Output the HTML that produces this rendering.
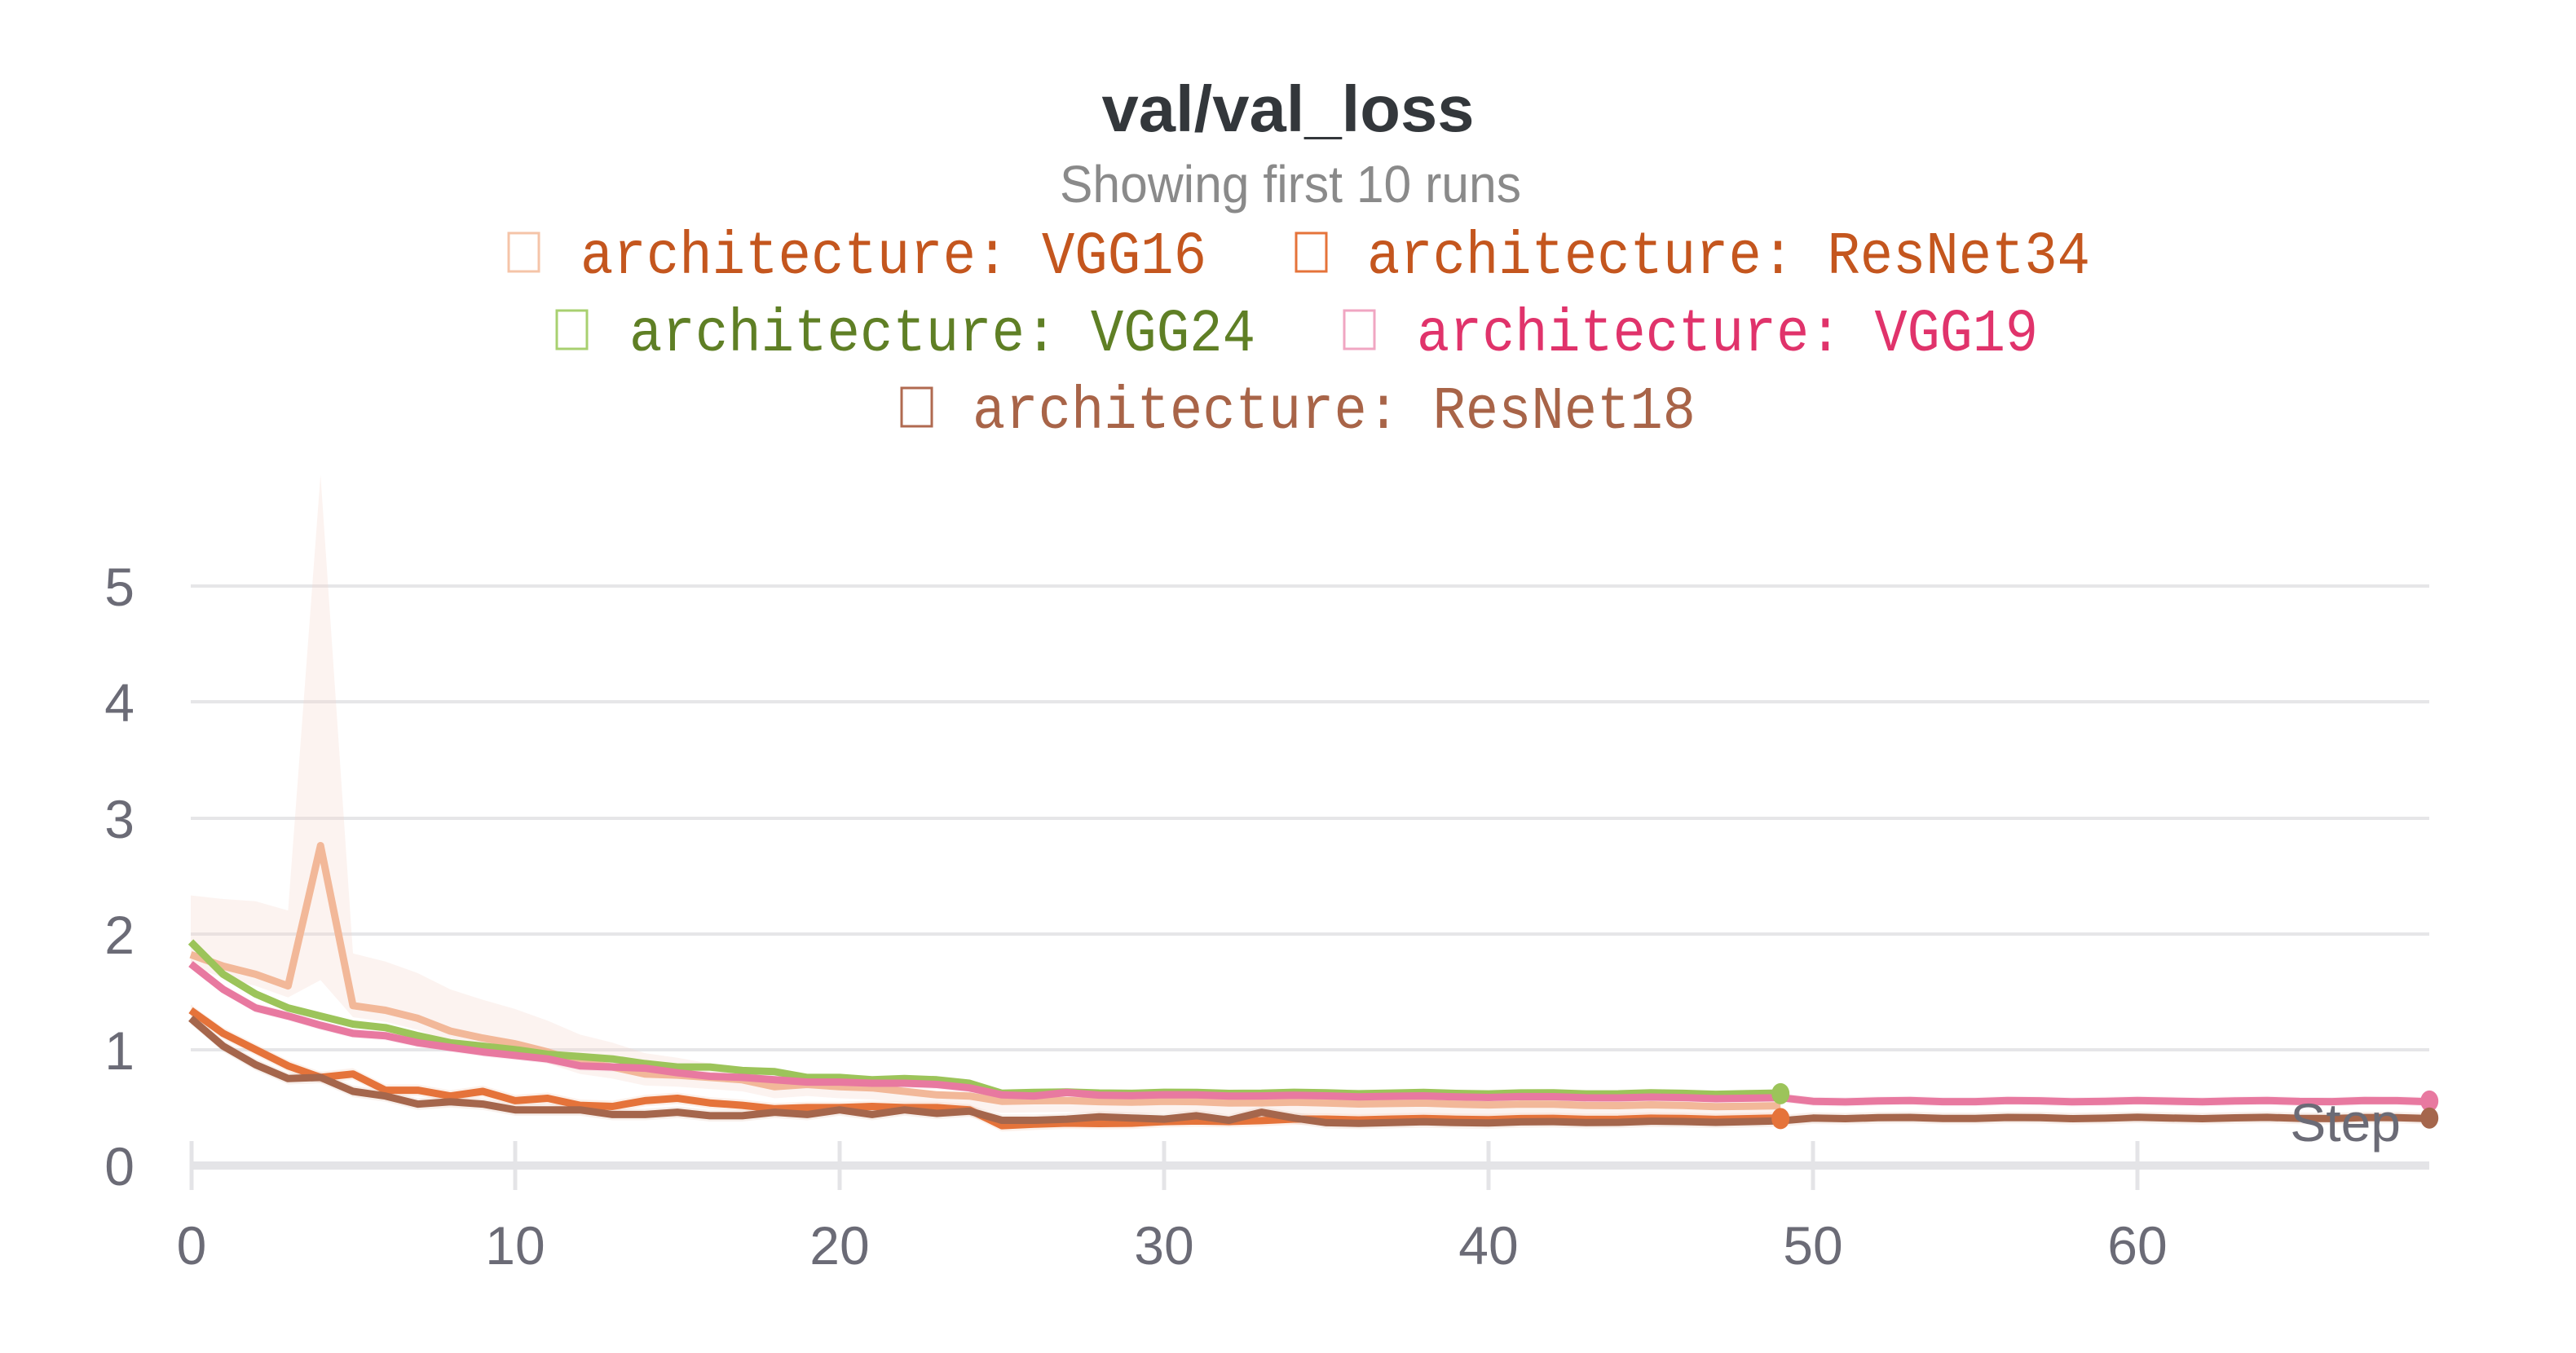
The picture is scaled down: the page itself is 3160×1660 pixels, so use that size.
<!DOCTYPE html>
<html><head><meta charset="utf-8"><style>
html,body{margin:0;padding:0;background:#fff;width:3160px;height:1660px;overflow:hidden}
svg{position:absolute;left:0;top:0}
.m{font-family:"Liberation Mono",monospace;font-size:74px}
.n{font-family:"Liberation Sans",sans-serif;font-size:66px;fill:#6b6b76}
</style></head><body>
<svg id="s" width="3160" height="1660" viewBox="0 0 3160 1660" xmlns="http://www.w3.org/2000/svg">
<text x="1580" y="161" text-anchor="middle" font-family="Liberation Sans,sans-serif" font-weight="bold" font-size="80" fill="#33373b" textLength="457" lengthAdjust="spacingAndGlyphs">val/val_loss</text>
<text x="1583" y="248" text-anchor="middle" font-family="Liberation Sans,sans-serif" font-size="64" fill="#8a8a8a" textLength="566" lengthAdjust="spacingAndGlyphs">Showing first 10 runs</text>

<rect x="624" y="286" width="37" height="47" fill="none" stroke="#f5c4a8" stroke-width="3"/>
<text class="m" x="712" y="335" fill="#c4561e" textLength="768" lengthAdjust="spacingAndGlyphs">architecture: VGG16</text>
<rect x="1590" y="286" width="37" height="47" fill="none" stroke="#e5733a" stroke-width="3"/>
<text class="m" x="1677" y="335" fill="#c4561e" textLength="887" lengthAdjust="spacingAndGlyphs">architecture: ResNet34</text>

<rect x="683" y="381" width="37" height="47" fill="none" stroke="#a8d070" stroke-width="3"/>
<text class="m" x="772" y="430" fill="#5f7f25" textLength="768" lengthAdjust="spacingAndGlyphs">architecture: VGG24</text>
<rect x="1649" y="381" width="37" height="47" fill="none" stroke="#f0a6c2" stroke-width="3"/>
<text class="m" x="1738" y="430" fill="#e0336b" textLength="762" lengthAdjust="spacingAndGlyphs">architecture: VGG19</text>

<rect x="1106" y="476" width="37" height="47" fill="none" stroke="#b06a50" stroke-width="3"/>
<text class="m" x="1193" y="525" fill="#a86448" textLength="887" lengthAdjust="spacingAndGlyphs">architecture: ResNet18</text>

<g stroke="#e6e6e8" stroke-width="4">
<line x1="234" y1="1288" x2="2980" y2="1288"/>
<line x1="234" y1="1146" x2="2980" y2="1146"/>
<line x1="234" y1="1004" x2="2980" y2="1004"/>
<line x1="234" y1="861" x2="2980" y2="861"/>
<line x1="234" y1="719" x2="2980" y2="719"/>
</g>
<line x1="234" y1="1430" x2="2980" y2="1430" stroke="#e4e4e7" stroke-width="10"/>
<g stroke="#e4e4e7" stroke-width="5">
<line x1="235" y1="1400" x2="235" y2="1460"/><line x1="632" y1="1400" x2="632" y2="1460"/>
<line x1="1030" y1="1400" x2="1030" y2="1460"/><line x1="1428" y1="1400" x2="1428" y2="1460"/>
<line x1="1826" y1="1400" x2="1826" y2="1460"/><line x1="2224" y1="1400" x2="2224" y2="1460"/>
<line x1="2622" y1="1400" x2="2622" y2="1460"/>
</g>
<g class="n" text-anchor="end">
<text x="165" y="1454">0</text><text x="165" y="1312">1</text><text x="165" y="1170">2</text>
<text x="165" y="1028">3</text><text x="165" y="885">4</text><text x="165" y="743">5</text>
</g>
<g class="n" text-anchor="middle">
<text x="235" y="1551">0</text><text x="632" y="1551">10</text><text x="1030" y="1551">20</text>
<text x="1428" y="1551">30</text><text x="1826" y="1551">40</text><text x="2224" y="1551">50</text>
<text x="2622" y="1551">60</text>
</g>
<g id="plot"></g>
<text class="n" x="2945" y="1400" text-anchor="end" font-size="68">Step</text>
</svg>
<script>
var X=function(i){return 234+39.8*i},Y=function(v){return 1430-142.2*v};
function fill(a,n,from,to,vf,vt){for(var i=from;i<=to;i++){var t=(i-from)/Math.max(1,to-from);a[i]=vf+(vt-vf)*t+0.006*Math.sin(i*1.7);}return a;}
var g=[1.93,1.65,1.48,1.36,1.29,1.22,1.19,1.12,1.06,1.03,1.00,0.96,0.94,0.92,0.88,0.85,0.85,0.82,0.81,0.76,0.76,0.74,0.75,0.74,0.71];fill(g,50,25,49,0.63,0.62);
var p=[1.74,1.52,1.36,1.29,1.21,1.14,1.12,1.06,1.02,0.98,0.95,0.92,0.86,0.85,0.84,0.80,0.77,0.76,0.74,0.72,0.72,0.71,0.71,0.70,0.67,0.61,0.60,0.63];fill(p,70,28,49,0.61,0.58);fill(p,70,50,69,0.555,0.556);
var f=[1.82,1.72,1.65,1.55,2.76,1.38,1.34,1.27,1.16,1.10,1.05,0.98,0.89,0.85,0.79,0.78,0.76,0.74,0.68,0.70,0.68,0.67,0.64,0.61,0.60];fill(f,50,25,49,0.56,0.51);
var o=[1.34,1.14,1.00,0.86,0.76,0.79,0.65,0.65,0.60,0.64,0.56,0.58,0.52,0.51,0.56,0.58,0.54,0.52,0.49,0.50,0.50,0.51,0.50,0.50,0.48];fill(o,50,25,35,0.35,0.40);fill(o,50,36,49,0.40,0.405);
var b=[1.27,1.03,0.87,0.75,0.76,0.64,0.60,0.53,0.55,0.53,0.48,0.48,0.48,0.44,0.44,0.46,0.43,0.43,0.46,0.44,0.48,0.44,0.48,0.45,0.47,0.39,0.39,0.40,0.42,0.41,0.40,0.43,0.39,0.46,0.41,0.37];fill(b,70,36,49,0.37,0.38);fill(b,70,50,69,0.41,0.41);
function pts(a){return a.map(function(v,i){return X(i).toFixed(1)+','+Y(v).toFixed(1)}).join(' ')}
var h='';
var up=f.map(function(v,i){return i==4?5.96:(i<4?[2.33,2.30,2.28,2.20][i]:v+Math.max(0.03,(0.6-i*0.03)))}),lo=f.map(function(v,i){return i==4?1.6:v-0.1});
var poly=up.map(function(v,i){return X(i)+','+Y(v)}).concat(lo.map(function(v,i){return X(i)+','+Y(v)}).reverse()).join(' ');
h+='<polygon points="'+poly+'" fill="#f6d8cc" opacity="0.3"/>';
function band(a,d,c){var pp=a.map(function(v,i){return X(i)+','+Y(v+d)}).concat(a.map(function(v,i){return X(i)+','+Y(v-d)}).reverse()).join(' ');return '<polygon points="'+pp+'" fill="'+c+'" opacity="0.25"/>';}
h+=band(o,0.05,'#f3c8b0')+band(b,0.05,'#e4c4b4')+band(p,0.04,'#f5c8d8');
[[f,'#f2b899'],[g,'#9cc45a'],[p,'#e879a0'],[o,'#e5733a'],[b,'#a5664c']].forEach(function(s){h+='<polyline points="'+pts(s[0])+'" fill="none" stroke="'+s[1]+'" stroke-width="9" stroke-linejoin="round"/>';});
h+='<ellipse cx="'+X(49)+'" cy="'+Y(0.62)+'" rx="11" ry="13" fill="#9cc45a"/>';
h+='<ellipse cx="'+X(49)+'" cy="'+Y(0.405)+'" rx="11" ry="13" fill="#e5733a"/>';
h+='<ellipse cx="'+X(69)+'" cy="'+Y(0.556)+'" rx="11" ry="13" fill="#e879a0"/>';
h+='<ellipse cx="'+X(69)+'" cy="'+Y(0.41)+'" rx="11" ry="13" fill="#a5664c"/>';
document.getElementById('plot').innerHTML=h;
</script>
</body></html>
